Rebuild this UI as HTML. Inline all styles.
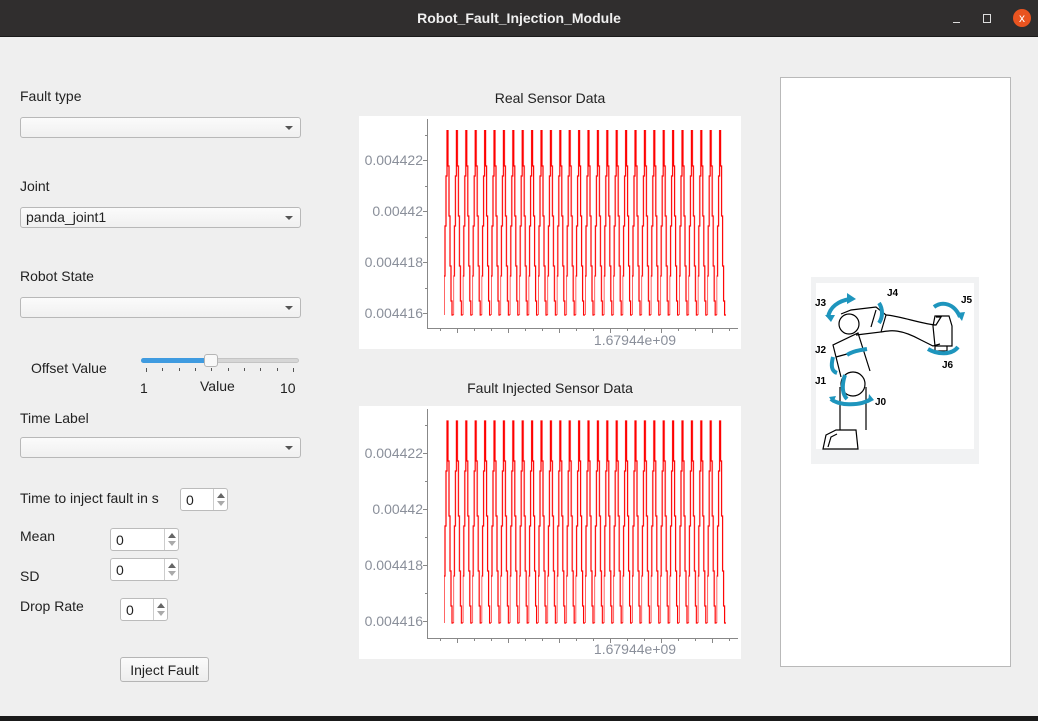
<!DOCTYPE html>
<html><head><meta charset="utf-8"><style>
*{margin:0;padding:0;box-sizing:border-box}
body{width:1038px;height:721px;background:#efefef;font-family:"Liberation Sans","DejaVu Sans",sans-serif;font-size:14px;color:#222;position:relative;overflow:hidden}
.a{position:absolute}
.tb{left:0;top:0;width:1038px;height:37px;background:#302e2e;border-bottom:1px solid #1a1a1a}
.combo{position:absolute;left:20px;width:281px;height:21px;border:1px solid #b8b8b8;border-radius:3px;background:linear-gradient(#fbfbfb,#f0f0f0)}
.combo:after{content:"";position:absolute;right:7px;top:8px;border-left:4px solid transparent;border-right:4px solid transparent;border-top:4px solid #555}
.lbl{position:absolute;font-size:14px;color:#222}
.spin{position:absolute;height:23px;border:1px solid #bbb;border-radius:3px;background:#fff;font-size:14px;padding:3px 0 0 5px}
.spin i{position:absolute;right:0;top:0;width:14px;height:100%;border-left:1px solid #ccc}
.spin i:before{content:"";position:absolute;left:3px;top:4px;border-left:4px solid transparent;border-right:4px solid transparent;border-bottom:5px solid #666}
.spin i:after{content:"";position:absolute;left:3px;bottom:4px;border-left:4px solid transparent;border-right:4px solid transparent;border-top:5px solid #aaa}
.tick{font-size:14px;fill:#8a8f9a}
</style></head><body>
<div class="a tb"></div>
<div class="a" style="left:0;top:10px;width:1038px;text-align:center;color:#f0f0f0;font-weight:bold;font-size:14px">Robot_Fault_Injection_Module</div>
<div class="a" style="left:953px;top:22px;width:7px;height:1px;background:#ddd"></div>
<div class="a" style="left:983px;top:14px;width:8px;height:9px;border:1px solid #ddd"></div>
<div class="a" style="left:1013px;top:9px;width:18px;height:18px;border-radius:50%;background:#e95420;color:#fff;font-size:12px;text-align:center;line-height:18px">x</div>

<div class="lbl" style="left:20px;top:88px">Fault type</div>
<div class="combo" style="top:117px"></div>
<div class="lbl" style="left:20px;top:178px">Joint</div>
<div class="combo" style="top:207px"><span style="position:absolute;left:5px;top:1px;font-size:14px">panda_joint1</span></div>
<div class="lbl" style="left:20px;top:268px">Robot State</div>
<div class="combo" style="top:297px"></div>

<div class="lbl" style="left:31px;top:360px">Offset Value</div>
<div class="a" style="left:141px;top:358px;width:158px;height:5px;border-radius:3px;background:#d6d6d6;border:1px solid #c4c4c4"></div>
<div class="a" style="left:141px;top:358px;width:70px;height:5px;border-radius:3px;background:#3f9be0"></div>
<div class="a" style="left:204px;top:354px;width:14px;height:13px;border-radius:3px;background:#f8f8f8;border:1px solid #b5b5b5"></div>
<svg class="a" style="left:140px;top:367px" width="160" height="6"><g stroke="#555" stroke-width="1">
<line x1="6.5" y1="1" x2="6.5" y2="5"/><line x1="22.5" y1="1" x2="22.5" y2="4"/><line x1="39.5" y1="1" x2="39.5" y2="4"/><line x1="55.5" y1="1" x2="55.5" y2="4"/><line x1="71.5" y1="1" x2="71.5" y2="4"/><line x1="88.5" y1="1" x2="88.5" y2="4"/><line x1="104.5" y1="1" x2="104.5" y2="4"/><line x1="120.5" y1="1" x2="120.5" y2="4"/><line x1="137.5" y1="1" x2="137.5" y2="4"/><line x1="153.5" y1="1" x2="153.5" y2="5"/></g></svg>
<div class="lbl" style="left:140px;top:380px">1</div>
<div class="lbl" style="left:200px;top:378px">Value</div>
<div class="lbl" style="left:280px;top:380px">10</div>

<div class="lbl" style="left:20px;top:410px">Time Label</div>
<div class="combo" style="top:437px"></div>

<div class="lbl" style="left:20px;top:490px">Time to inject fault in s</div>
<div class="spin" style="left:180px;top:488px;width:48px">0<i></i></div>
<div class="lbl" style="left:20px;top:528px">Mean</div>
<div class="spin" style="left:110px;top:528px;width:69px">0<i></i></div>
<div class="lbl" style="left:20px;top:568px">SD</div>
<div class="spin" style="left:110px;top:558px;width:69px">0<i></i></div>
<div class="lbl" style="left:20px;top:598px">Drop Rate</div>
<div class="spin" style="left:120px;top:598px;width:48px">0<i></i></div>
<div class="a" style="left:120px;top:657px;width:89px;height:25px;border:1px solid #b5b5b5;border-radius:3px;background:linear-gradient(#fbfbfb,#ededed);text-align:center;padding-top:4px;font-size:14px">Inject Fault</div>

<div class="lbl" style="left:359px;top:90px;width:382px;text-align:center">Real Sensor Data</div>
<div class="lbl" style="left:359px;top:380px;width:382px;text-align:center">Fault Injected Sensor Data</div>

<svg class="a" style="left:359px;top:116px" width="382" height="233">
<defs><pattern id="w" x="85" y="0" width="9.4" height="233" patternUnits="userSpaceOnUse">
<path d="M0,199V160H1V110H2V60H3V14H4V50H5V100H6V150H7V185H8V199H9.4" stroke="#f00" stroke-width="1.2" fill="none"/></pattern></defs>
<rect width="382" height="233" fill="#fff"/>
<rect x="85" y="14" width="282" height="186" fill="url(#w)"/>
<g stroke="#888" fill="none"><path d="M68.5,3V212.5H379"/>
<path d="M64,44.5h4M64,95.5h4M64,146.5h4M64,197.5h4M66,19.5h2M66,70.5h2M66,121.5h2M66,172.5h2" />
<path d="M98.5,213v4M149.5,213v4M200.5,213v4M251.5,213v4M302.5,213v4M353.5,213v4M81.5,213v2M115.5,213v2M132.5,213v2M166.5,213v2M183.5,213v2M217.5,213v2M234.5,213v2M268.5,213v2M285.5,213v2M319.5,213v2M336.5,213v2M370.5,213v2"/></g>
<g class="tick" text-anchor="end"><text x="64" y="49">0.004422</text><text x="64" y="100">0.00442</text><text x="64" y="151">0.004418</text><text x="64" y="202">0.004416</text></g>
<text class="tick" x="276" y="229" text-anchor="middle">1.67944e+09</text>
</svg>
<svg class="a" style="left:359px;top:406px" width="382" height="253">
<defs><pattern id="w2" x="85" y="0" width="9.4" height="253" patternUnits="userSpaceOnUse">
<path d="M0,217V170H1V120H2V65H3V15H4V55H5V110H6V165H7V200H8V217H9.4" stroke="#f00" stroke-width="1.2" fill="none"/></pattern></defs>
<rect width="382" height="253" fill="#fff"/>
<rect x="85" y="14" width="282" height="204" fill="url(#w2)"/>
<g stroke="#888" fill="none"><path d="M68.5,3V232.5H379"/>
<path d="M64,47.5h4M64,103.5h4M64,159.5h4M64,215.5h4M66,19.5h2M66,75.5h2M66,131.5h2M66,187.5h2"/>
<path d="M98.5,233v4M149.5,233v4M200.5,233v4M251.5,233v4M302.5,233v4M353.5,233v4M81.5,233v2M115.5,233v2M132.5,233v2M166.5,233v2M183.5,233v2M217.5,233v2M234.5,233v2M268.5,233v2M285.5,233v2M319.5,233v2M336.5,233v2M370.5,233v2"/></g>
<g class="tick" text-anchor="end"><text x="64" y="52">0.004422</text><text x="64" y="108">0.00442</text><text x="64" y="164">0.004418</text><text x="64" y="220">0.004416</text></g>
<text class="tick" x="276" y="248" text-anchor="middle">1.67944e+09</text>
</svg>

<div class="a" style="left:780px;top:77px;width:231px;height:590px;background:#fff;border:1px solid #b9b9b9"></div>
<svg class="a" style="left:811px;top:277px" width="168" height="187">
<rect width="168" height="187" fill="#f1f2f3"/>
<rect x="5" y="6" width="158" height="166" fill="#fff"/>
<g fill="none" stroke="#000" stroke-width="1.2">
<path d="M12,172l3,-14 10,-5h20l2,19z"/>
<path d="M17,170l3,-10 6,-3"/>
<path d="M29,153V110M55,153V110"/>
<circle cx="42" cy="107" r="12"/>
<path d="M30,100l-8,-32 25,-12 12,38"/>
<path d="M25,80l22,-6"/>
<circle cx="38" cy="47" r="10"/>
<path d="M30,37l10,-4 25,-3 10,8 -5,17 -25,3"/>
<path d="M60,50l5,-17"/>
<path d="M75,38c10,0 40,10 50,10l5,-8h-5M70,55c10,-2 20,-3 40,8l12,6 7,-2"/>
<path d="M122,49l2,-10h14l3,10v20h-17z"/>
<path d="M124,69v5h12v-5"/>
</g>
<g fill="none" stroke="#1e95bd" stroke-width="4">
<path d="M17,40c2,-10 10,-16 22,-18"/>
<path d="M36,78c6,-4 14,-5 20,-6"/>
<path d="M22,80c-2,8 -2,14 4,16"/>
<path d="M34,98c-4,12 -2,20 2,24"/>
<path d="M20,122c6,6 28,8 40,0"/>
<path d="M68,46c4,-6 4,-14 0,-20"/>
<path d="M123,30c8,-6 20,-4 26,10"/>
<path d="M117,72c10,6 24,6 30,-2"/>
</g>
<g fill="#1e95bd"><path d="M36,16l9,6 -9,5z"/><path d="M14,38l6,7 4,-7z"/><path d="M145,36l6,8 3,-9z"/><path d="M18,120l4,6 3,-7z"/><path d="M58,117l5,6 -6,3z"/></g>
<g font-family="Liberation Sans" font-weight="bold" font-size="10" fill="#000">
<text x="4" y="29">J3</text><text x="76" y="19">J4</text><text x="150" y="26">J5</text><text x="4" y="76">J2</text><text x="131" y="91">J6</text><text x="4" y="107">J1</text><text x="64" y="128">J0</text></g>
</svg>
<div class="a" style="left:0;top:716px;width:1038px;height:5px;background:#1a1a1a"></div>
</body></html>
